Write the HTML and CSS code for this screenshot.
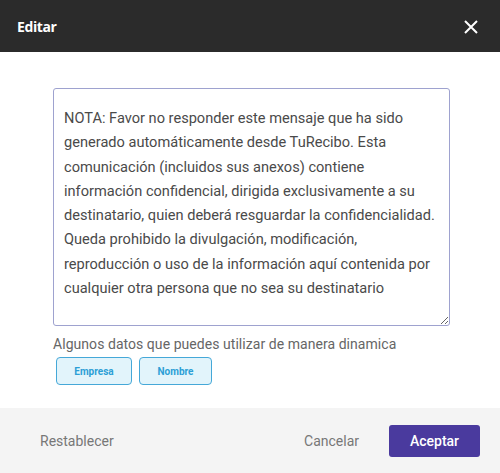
FILE: index.html
```html
<!DOCTYPE html>
<html lang="es">

<head>
    <meta charset="UTF-8">
    <title>Editar</title>
    <link rel="stylesheet" href="styles.css">
</head>

<body>
    <div class="dialog">
        <div class="dialog-header">
            <h2>Editar</h2>
            <button class="close">
                <svg width="14" height="14" viewBox="0 0 14 14">
                    <path d="M1 1L13 13M13 1L1 13" stroke="#fff" stroke-width="2" fill="none"/>
                </svg>
            </button>
        </div>
        <div class="dialog-body">
            <textarea class="message">NOTA: Favor no responder este mensaje que ha sido generado automáticamente desde TuRecibo. Esta comunicación (incluidos sus anexos) contiene información confidencial, dirigida exclusivamente a su destinatario, quien deberá resguardar la confidencialidad. Queda prohibido la divulgación, modificación, reproducción o uso de la información aquí contenida por cualquier otra persona que no sea su destinatario</textarea>
            <p class="hint">Algunos datos que puedes utilizar de manera dinamica</p>
            <div class="tags">
                <button class="tag">Empresa</button>
                <button class="tag">Nombre</button>
            </div>
        </div>
        <div class="dialog-footer">
            <button class="btn btn-text">Restablecer</button>
            <div class="actions">
                <button class="btn btn-text">Cancelar</button>
                <button class="btn btn-primary">Aceptar</button>
            </div>
        </div>
    </div>
</body>

</html>
```

FILE: styles.css
```css
body {
    margin: 0;
    background: #fff;
    font-family: Roboto, "Liberation Sans", sans-serif;
}

.dialog {
    width: 500px;
    height: 473px;
    display: flex;
    flex-direction: column;
}

.dialog-header {
    height: 52px;
    background: #2b2b2b;
    display: flex;
    align-items: center;
    justify-content: space-between;
    padding: 0 22px 0 17px;
    box-sizing: border-box;
}

.dialog-header h2 {
    margin: 0;
    color: #fff;
    font-family: "Open Sans", sans-serif;
    font-size: 14px;
    font-weight: 700;
    letter-spacing: -0.4px;
}

.close {
    background: none;
    border: none;
    padding: 0;
    width: 14px;
    height: 14px;
    display: flex;
    margin-top: 1px;
}

.dialog-body {
    flex: 1;
    padding: 36px 0 0 53px;
}

.message {
    display: block;
    width: 397px;
    height: 238px;
    box-sizing: border-box;
    padding: 17px 10px 10px 10px;
    border: 1px solid #9ea2cf;
    border-radius: 3px;
    font-family: Roboto, sans-serif;
    font-size: 14.6px;
    line-height: 24.3px;
    color: #4a4a4a;
    resize: vertical;
    outline: none;
}

.hint {
    margin: 10px 0 0;
    font-size: 14px;
    letter-spacing: 0.05px;
    color: #666;
}

.tags {
    display: flex;
    gap: 7px;
    margin: 5px 0 0 3px;
}

.tag {
    width: 76px;
    height: 28px;
    border: 1px solid #45a8d8;
    border-radius: 4px;
    background: #e2f4fb;
    color: #2c9fd6;
    font-family: Roboto, sans-serif;
    font-size: 10px;
    font-weight: 700;
    padding: 0;
}

.tag + .tag {
    width: 73px;
}

.dialog-footer {
    height: 65px;
    background: #f4f4f4;
    display: flex;
    align-items: center;
    justify-content: space-between;
    padding: 0 20px 0 40px;
}

.actions {
    display: flex;
    align-items: center;
    gap: 30px;
}

.btn {
    font-family: Roboto, sans-serif;
    font-size: 14px;
    border: none;
    background: none;
    padding: 0;
    cursor: pointer;
}

.btn-text {
    color: #777;
}

.btn-primary {
    width: 91px;
    height: 32px;
    background: #4a3a9e;
    color: #fff;
    font-weight: 500;
    border-radius: 3px;
}
```
